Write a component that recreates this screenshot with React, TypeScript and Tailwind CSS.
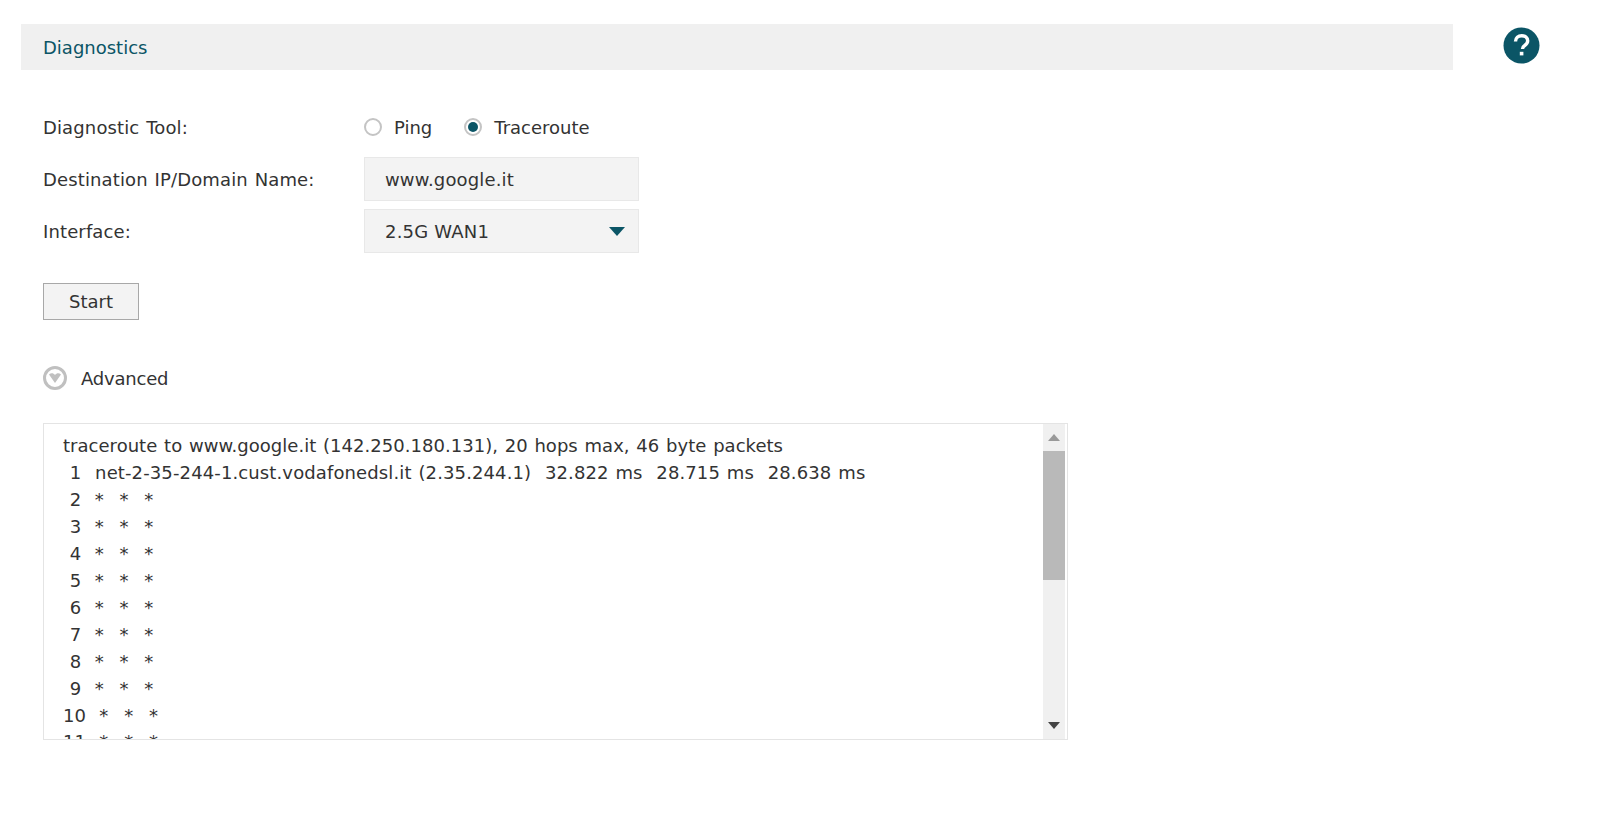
const hops = ["2", "3", "4", "5", "6", "7", "8", "9", "10", "11"];

function HelpIcon() {
  return (
    <svg width="37" height="37" viewBox="0 0 37 37">
      <circle cx="18.5" cy="18.5" r="18" fill="#0b5566" />
      <path d="M12.5 14.5c0-3.6 2.7-5.8 6.2-5.8 3.400 0 6 2 6 5.100 0 2.400-1.300 3.500-3 4.700-1.500 1-2.200 1.800-2.200 3.500" fill="none" stroke="#fff" strokeWidth="3.4" />
      <rect x="16.8" y="24.8" width="3.6" height="3.6" fill="#fff" />
    </svg>
  );
}

function Radio({ label, checked }: { label: string; checked?: boolean }) {
  return (
    <div className="flex items-center gap-[12px]">
      <div className="flex size-[18px] items-center justify-center rounded-full border-2 border-[#c4c4c4] bg-white">
        {checked && <div className="size-[10px] rounded-full bg-[#0b5566]" />}
      </div>
      <span>{label}</span>
    </div>
  );
}

function Row({ label, children }: { label: string; children: React.ReactNode }) {
  return (
    <div className="flex items-center">
      <div className="w-[321px] pt-[1px] tracking-[0.13px] [word-spacing:1px]">{label}</div>
      {children}
    </div>
  );
}

export default function App() {
  return (
    <div className="h-[826px] w-[1605px] overflow-hidden bg-white pt-[24px] pl-[21px] font-['DejaVu_Sans',sans-serif] text-[18px] text-[#333]">
      <div className="flex items-center">
        <div className="flex h-[46px] w-[1432px] items-center bg-[#f0f0f0] pl-[22px] text-[#0b5566]">Diagnostics</div>
        <div className="mb-[4px] ml-[50px]"><HelpIcon /></div>
      </div>

      <div className="pl-[22px]">
        <div className="mt-[44px] flex h-[26px] items-center">
          <div className="w-[321px] tracking-[0.13px] [word-spacing:1px]">Diagnostic Tool:</div>
          <div className="flex gap-[32px]">
            <Radio label="Ping" />
            <Radio label="Traceroute" checked />
          </div>
        </div>

        <div className="mt-[17px] flex flex-col gap-[8px]">
          <Row label="Destination IP/Domain Name:">
            <div className="flex h-[44px] w-[275px] items-center border border-[#e8e8e8] bg-[#f3f3f3] pl-[20px] tracking-[0.15px]">www.google.it</div>
          </Row>
          <Row label="Interface:">
            <div className="flex h-[44px] w-[275px] items-center justify-between border border-[#e8e8e8] bg-[#f3f3f3] pr-[13px] pl-[20px]">
              <span className="tracking-[0.2px]">2.5G WAN1</span>
              <div className="size-0 border-x-[8px] border-t-[9px] border-x-transparent border-t-[#0b5566]" />
            </div>
          </Row>
        </div>

        <button className="mt-[30px] block h-[37px] w-[96px] border border-[#a8a8a8] bg-[#f3f3f3] text-center">Start</button>

        <div className="mt-[46px] flex h-[24px] items-center gap-[14px]">
          <div className="flex size-[24px] items-center justify-center rounded-full border-[3px] border-[#c0c0c0]">
            <svg width="14" height="12" viewBox="0 0 14 12"><path d="M1 2.5 7 11l6-8.500C11 0.500 8.500 1 7 3 5.500 1 3 0.500 1 2.500Z" fill="#c0c0c0" /></svg>
          </div>
          <span className="pt-[1px] tracking-[-0.2px]">Advanced</span>
        </div>

        <div className="mt-[33px] flex h-[317px] w-[1025px] border border-[#e4e4e4] pr-[2px]">
          <div className="min-w-0 flex-1 overflow-hidden pt-[9px] pl-[19px] leading-[26.95px] whitespace-pre [word-spacing:1px]">
            <div className="tracking-[0.03px]">traceroute to www.google.it (142.250.180.131), 20 hops max, 46 byte packets</div>
            <div className="tracking-[0.12px]"> 1  net-2-35-244-1.cust.vodafonedsl.it (2.35.244.1)  32.822 ms  28.715 ms  28.638 ms</div>
            {hops.map((hop) => (
              <div key={hop}>
                {hop.padStart(2, " ")}  <span className="[word-spacing:2.2px]">*  *  *</span>
              </div>
            ))}
          </div>
          <div className="flex w-[22px] flex-col items-center bg-[#f0f0f0]">
            <div className="flex h-[27px] w-full items-center justify-center">
              <div className="size-0 border-x-[6px] border-b-[7px] border-x-transparent border-b-[#999]" />
            </div>
            <div className="h-[129px] w-full bg-[#b9b9b9]" />
            <div className="flex-1" />
            <div className="flex h-[27px] w-full items-center justify-center">
              <div className="size-0 border-x-[6px] border-t-[7px] border-x-transparent border-t-[#444]" />
            </div>
          </div>
        </div>
      </div>
    </div>
  );
}
